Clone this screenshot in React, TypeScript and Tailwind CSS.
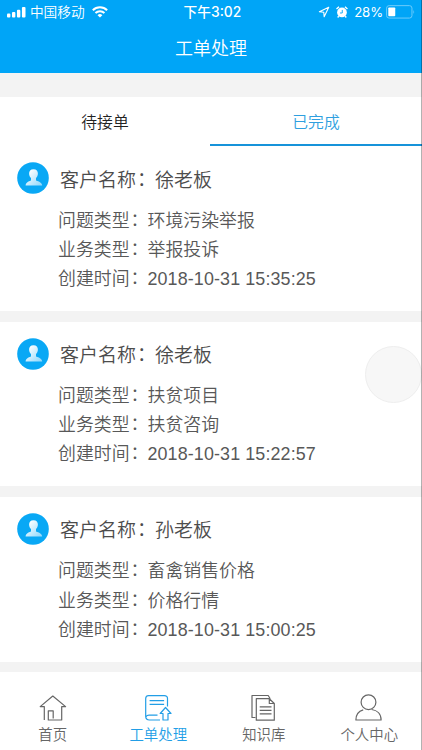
const orders = [
  { name: "徐老板", issue: "环境污染举报", business: "举报投诉", created: "2018-10-31 15:35:25" },
  { name: "徐老板", issue: "扶贫项目", business: "扶贫咨询", created: "2018-10-31 15:22:57" },
  { name: "孙老板", issue: "畜禽销售价格", business: "价格行情", created: "2018-10-31 15:00:25" },
]

function StatusBar() {
  return (
    <div className="flex h-6 items-center pl-[7px] pr-[7px] text-[13.7px] leading-6">
      <svg width="19" height="11" viewBox="0 0 19 11" fill="currentColor">
        <rect x="0" y="6.5" width="3.4" height="4" rx="1" />
        <rect x="5" y="5" width="3.4" height="5.5" rx="1" />
        <rect x="10" y="2.7" width="3.4" height="7.8" rx="1" />
        <rect x="15" y="0" width="3.6" height="10.5" rx="1" />
      </svg>
      <span className="ml-1 w-[55px] whitespace-nowrap pt-0.5 font-[350]">中国移动</span>
      <svg className="ml-[7px]" width="16" height="12" viewBox="0 0 16 12" fill="none" stroke="currentColor" strokeWidth="2">
        <path d="M.8 4.2a10.2 10.2 0 0 1 14.4 0M3.5 7a6.4 6.4 0 0 1 9 0" />
        <path d="M8 11.6 5.6 9.2a3.4 3.4 0 0 1 4.8 0z" fill="currentColor" stroke="none" />
      </svg>
      <span className="ml-[76px] w-[59px] whitespace-nowrap font-medium">
        下午<span className="font-['Inter'] text-[13.8px] font-medium">3:02</span>
      </span>
      <svg className="ml-[76px]" width="12" height="12" viewBox="0 0 12 12" fill="none" stroke="currentColor" strokeWidth="1.1" strokeLinejoin="round">
        <path d="M10.8 1.2 1.4 5.8l4.4.5.4 4.5z" />
      </svg>
      <svg className="ml-[6px]" width="12" height="12" viewBox="0 0 12 12" fill="currentColor">
        <circle cx="6" cy="6.5" r="4.9" />
        <path d="M.5 3 3 .8M11.5 3 9 .8M2.7 10.2l-1 1.3M9.3 10.2l1 1.3" stroke="currentColor" strokeWidth="1.4" />
        <path d="M6.3 3.9V7H4" fill="none" stroke="#00a5f7" strokeWidth="0.9" />
      </svg>
      <span className="ml-[6px] w-[28px] whitespace-nowrap font-['Inter'] text-[13.2px] tracking-[-0.1px]">28%</span>
      <svg className="ml-[4px]" width="29" height="14" viewBox="0 0 29 14">
        <rect x=".6" y=".6" width="25.5" height="12.5" rx="2.5" fill="none" stroke="#6dccfb" />
        <rect x="2.3" y="2.5" width="7" height="8.8" rx=".8" fill="white" />
        <path d="M27.5 4.7q1.6 2 0 4.2z" fill="#6dccfb" />
      </svg>
    </div>
  )
}

function Avatar() {
  return (
    <svg className="shrink-0" width="32" height="32" viewBox="0 0 32 32">
      <defs>
        <linearGradient id="person" x1="0" y1="0" x2="1" y2="1">
          <stop offset="0.15" stopColor="#ffffff" />
          <stop offset="1" stopColor="#8bd6fb" />
        </linearGradient>
      </defs>
      <circle cx="16" cy="16" r="15.8" fill="#09a8f5" />
      <path
        d="M16.5 7.2c3 0 4.5 1.9 4.4 4.6-.1 1.9-.9 3.3-1.9 4.2v2.2c.7 1.2 6 1.2 6.2 5.3H8.6c.1-4.1 4.7-4.1 5.4-5.3V16c-1.1-1-1.8-2.3-1.9-4.2-.1-2.7 1.4-4.6 4.4-4.6z"
        fill="url(#person)"
      />
    </svg>
  )
}

function Label({ children }: { children: string }) {
  return (
    <>
      {children}
      <span className="relative -top-px left-px">：</span>
    </>
  )
}

function OrderCard({ order }: { order: (typeof orders)[number] }) {
  return (
    <div className="mb-[11px] h-[164.4px] shrink-0 bg-white pt-[16px]">
      <div className="flex h-8 items-center pl-[17px] text-[19px] text-[#4c4c4c]">
        <Avatar />
        <div className="ml-[11px] whitespace-nowrap pt-[5px]">
          <Label>客户名称</Label>
          {order.name}
        </div>
      </div>
      <div className="pl-[58px] pt-[12.3px] text-[17.9px] leading-[29.2px] text-[#585858]">
        <div><Label>问题类型</Label>{order.issue}</div>
        <div><Label>业务类型</Label>{order.business}</div>
        <div>
          <Label>创建时间</Label>
          <span className="tracking-[0.12px]">{order.created}</span>
        </div>
      </div>
    </div>
  )
}

const icons = {
  home: (
    <path d="M5.3 26V12.6H1.2L13.8 2l12.8 10.6h-3.9V26H9.3v-9.2h4.9v7.7" />
  ),
  orders: (
    <>
      <path d="M16 26H5.5C3 26 1.7 24.7 1.7 22.3V4.5c0-2 1.3-2.9 2.8-2.9h15.8c2 0 3.2 1 3.2 3v8" />
      <path d="M5.6 6.6h14.5M5.6 10.4h14.5M2 22.6c.7-1.2 1.8-1.5 3-1.5h8.5" />
      <path d="m21.5 13.5-5.3 6h2.8V26h5v-6.5h3z" />
    </>
  ),
  library: (
    <>
      <path d="M5.5 23.5H2V1.5h16.2l2 3.3" />
      <path d="M6.3 4.7h13l5 4.8V26.2h-18zM19.3 4.7v4.8h5M9.7 12.9h11.8M9.7 16.4h11.8M9.7 19.9h11.8" />
    </>
  ),
  profile: (
    <>
      <circle cx="13.5" cy="8.2" r="7.4" />
      <path d="M8.2 15.9C3.8 17.2.9 20.4.9 26h25.2c0-6.2-4.2-9.8-9.4-10.5" />
    </>
  ),
}

const navItems = [
  { label: "首页", icon: icons.home },
  { label: "工单处理", icon: icons.orders, active: true },
  { label: "知识库", icon: icons.library },
  { label: "个人中心", icon: icons.profile },
]

export default function App() {
  return (
    <div className="relative flex h-[750px] w-[422px] flex-col overflow-hidden bg-[#f3f3f3] font-['Liberation_Sans','Noto_Sans_CJK_SC',sans-serif]">
      <header className="h-[73px] shrink-0 bg-[#00a5f7] text-white">
        <StatusBar />
        <h1 className="text-center text-[18px] leading-[50px] font-[350]">工单处理</h1>
      </header>

      <div className="mt-6 flex h-[49px] shrink-0 bg-white text-center text-[15.8px] leading-[52px] font-[350]">
        <div className="w-[210px] text-[#222]">待接单</div>
        <div className="flex-1 border-b-2 border-[#1793da] text-[#2f9fdf]">已完成</div>
      </div>

      <main className="flex min-h-0 flex-1 flex-col overflow-hidden bg-[linear-gradient(white_1px,transparent_1px)] pt-[0.4px] font-[350]">
        {orders.map((order) => (
          <OrderCard key={order.created} order={order} />
        ))}
      </main>

      <nav className="flex h-[78px] shrink-0 bg-white pt-[22px] font-[350]">
        {navItems.map((item) => (
          <div
            key={item.label}
            className={`flex flex-1 flex-col items-center ${item.active ? "text-[#229ee6]" : "text-[#666]"}`}
          >
            <svg width="28" height="27" viewBox="0 0 28 27" fill="none" stroke="currentColor" strokeWidth="1.2" strokeLinejoin="round">
              {item.icon}
            </svg>
            <span className="mt-1 whitespace-nowrap text-[14.4px] leading-5">{item.label}</span>
          </div>
        ))}
      </nav>

      <div className="absolute left-[365px] top-[346px] size-[57px] rounded-full border border-[#eeeeee] bg-[#f7f7f7]" />
      <div className="absolute right-0 top-0 h-full w-px bg-black/30" />
    </div>
  )
}
